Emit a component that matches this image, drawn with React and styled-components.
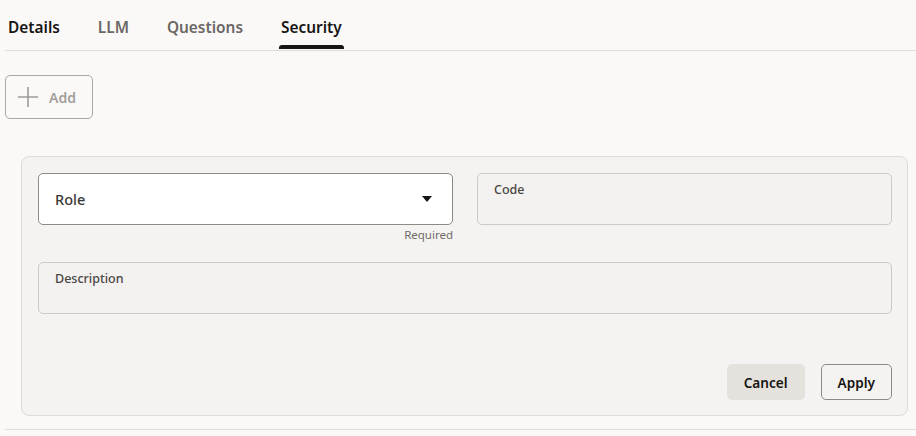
import React from 'react'
import styled, { createGlobalStyle } from 'styled-components'

const GlobalStyle = createGlobalStyle`
  html, body {
    margin: 0;
    padding: 0;
    background: #faf9f8;
    font-family: "Noto Sans", "Open Sans", sans-serif;
    color: #161513;
  }
  * { box-sizing: border-box; }
`

const Page = styled.div`
  width: 916px;
  height: 436px;
  padding-left: 5px;
  overflow: hidden;
`

const TabBar = styled.div`
  display: flex;
  height: 51px;
  padding-left: 2px;
  border-bottom: 1px solid #e0ddd9;
`

const Tab = styled.div`
  position: relative;
  display: flex;
  align-items: center;
  height: 100%;
  padding: 5px 1px 0;
  margin-right: 36px;
  font-size: 15.4px;
  font-weight: 600;
  color: ${(p) => (p.$muted ? '#6a6764' : '#161513')};

  &::after {
    content: '';
    display: ${(p) => (p.$active ? 'block' : 'none')};
    position: absolute;
    left: -1px;
    right: -1px;
    bottom: 1px;
    height: 4px;
    border-radius: 3px 3px 0 0;
    background: #161513;
  }
`

const Toolbar = styled.div`
  padding-top: 24px;
`

const AddButton = styled.button`
  display: flex;
  align-items: center;
  gap: 11px;
  height: 44px;
  width: 88px;
  padding: 0 12px;
  border: 1px solid #aaa6a2;
  border-radius: 5px;
  background: transparent;
  font-family: inherit;
  font-size: 14px;
  font-weight: 600;
  color: #a29e9a;
`

const Panel = styled.div`
  margin: 37px 8px 0 16px;
  height: 260px;
  padding: 16px 15px 15px 16px;
  border: 1px solid #dedad6;
  border-radius: 8px;
  background: #f4f3f1;
  display: flex;
  flex-direction: column;
`

const Grid = styled.div`
  display: grid;
  grid-template-columns: 415px 415px;
  column-gap: 24px;
  row-gap: 19px;
`

const Field = styled.div`
  grid-column: ${(p) => (p.$wide ? '1 / span 2' : 'auto')};
  display: flex;
  flex-direction: column;
`

const Box = styled.div`
  height: 52px;
  border-radius: 5px;
  border: 1px solid ${(p) => (p.$editable ? '#8d8985' : '#cdc9c5')};
  background: ${(p) => (p.$editable ? '#ffffff' : '#f3f2f0')};
  padding: ${(p) => (p.$editable ? '0 20px 0 16px' : '7px 16px')};
  display: flex;
  align-items: ${(p) => (p.$editable ? 'center' : 'flex-start')};
  justify-content: space-between;
`

const Value = styled.span`
  font-size: 14.5px;
  font-weight: 500;
  color: #3a3836;
`

const Label = styled.span`
  font-size: 12.5px;
  font-weight: 500;
  color: #4a4744;
`

const Helper = styled.div`
  text-align: right;
  font-size: 11.5px;
  color: #6f6c69;
  margin-top: 2px;
  height: 16px;
`

const Actions = styled.div`
  margin-top: auto;
  display: flex;
  justify-content: flex-end;
  gap: 16px;
`

const Button = styled.button`
  height: 36px;
  padding: 0 16px;
  border-radius: 5px;
  font-family: inherit;
  font-size: 13.6px;
  font-weight: 600;
  color: #161513;
  border: 1px solid ${(p) => (p.$outlined ? '#8d8985' : 'transparent')};
  background: ${(p) => (p.$outlined ? 'transparent' : '#e5e2de')};
`

const Divider = styled.div`
  margin-top: 13px;
  border-top: 1px solid #e0ddd9;
`

const PlusIcon = () => (
  <svg width="20" height="20" viewBox="0 0 20 20" fill="none">
    <path d="M10 0v20M0 10h20" stroke="#9e9a96" strokeWidth="1.6" />
  </svg>
)

const Caret = () => (
  <svg width="10" height="6" viewBox="0 0 10 6">
    <path d="M0 0h10L5 6z" fill="#161513" />
  </svg>
)

const App = () => (
  <>
    <GlobalStyle />
    <Page>
      <TabBar>
        <Tab>Details</Tab>
        <Tab $muted>LLM</Tab>
        <Tab $muted>Questions</Tab>
        <Tab $active>Security</Tab>
      </TabBar>
      <Toolbar>
        <AddButton>
          <PlusIcon />
          Add
        </AddButton>
      </Toolbar>
      <Panel>
        <Grid>
          <Field>
            <Box $editable>
              <Value>Role</Value>
              <Caret />
            </Box>
            <Helper>Required</Helper>
          </Field>
          <Field>
            <Box>
              <Label>Code</Label>
            </Box>
          </Field>
          <Field $wide>
            <Box>
              <Label>Description</Label>
            </Box>
          </Field>
        </Grid>
        <Actions>
          <Button>Cancel</Button>
          <Button $outlined>Apply</Button>
        </Actions>
      </Panel>
      <Divider />
    </Page>
  </>
)

export default App
